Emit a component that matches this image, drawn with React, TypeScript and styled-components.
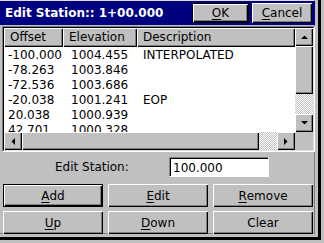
import styled, { createGlobalStyle, css } from "styled-components";

const GlobalStyle = createGlobalStyle`
  html, body {
    margin: 0;
    padding: 0;
    background: #c0c0c0;
  }
  body {
    font-family: "DejaVu Sans", "Liberation Sans", sans-serif;
    font-size: 12px;
    color: #000;
  }
`;

const raised = css`
  background: #c0c0c0;
  box-shadow: inset 1px 1px #fff, inset -1px -1px #000, inset -2px -2px #808080;
`;

const dither = css`
  background: repeating-conic-gradient(#fff 0 25%, #c0c0c0 0 50%) 0 0 / 2px 2px;
`;

const Screen = styled.div`
  width: 324px;
  height: 243px;
  background: #c0c0c0;
  overflow: hidden;
`;

const Window = styled.div`
  box-sizing: border-box;
  width: 321px;
  height: 240px;
  padding: 0 3px 3px 0;
  border-right: 3px solid #000;
  border-bottom: 3px solid #000;
`;

const Frame = styled.div`
  box-sizing: border-box;
  height: 100%;
  border-right: 1px solid #808080;
  border-bottom: 1px solid #808080;
  border-top: 1px solid #dfdfdf;
`;

const TitleBar = styled.div`
  display: flex;
  align-items: center;
  height: 24px;
  margin-right: -1px;
  padding-left: 5px;
  background: #000080;
`;

const Title = styled.div`
  flex: 1;
  color: #fff;
  font-weight: bold;
  font-size: 12px;
  white-space: nowrap;
`;

const TitleButton = styled.div<{ $w: number; $default?: boolean }>`
  ${raised};
  box-sizing: border-box;
  width: ${(p) => p.$w}px;
  height: 20px;
  margin-right: 3px;
  display: flex;
  align-items: center;
  justify-content: center;
  ${(p) => p.$default && "border: 1px solid #000;"}
`;

const Mn = styled.span`
  text-decoration: underline;
  text-underline-offset: 2px;
`;

const ListBox = styled.div`
  box-sizing: border-box;
  width: 313px;
  height: 126px;
  margin: 1px 0 0 2px;
  border: 1px solid;
  border-color: #808080 #fff #fff #808080;
`;

const ListInner = styled.div`
  box-sizing: border-box;
  height: 100%;
  border: 1px solid;
  border-color: #000 #dfdfdf #dfdfdf #000;
  display: grid;
  grid-template-columns: 291px 18px;
  grid-template-rows: 104px 18px;
`;

const Table = styled.div`
  background: #fff;
  overflow: hidden;
`;

const HeaderRow = styled.div`
  display: flex;
  height: 19px;
`;

const HeaderCell = styled.div<{ $w?: number }>`
  ${raised};
  box-sizing: border-box;
  ${(p) => (p.$w ? `width: ${p.$w}px;` : "flex: 1;")}
  height: 19px;
  padding: 1px 0 0 6px;
  line-height: 17px;
  white-space: nowrap;
  overflow: hidden;
`;

const Row = styled.div`
  display: flex;
  height: 15px;
  line-height: 15px;
  white-space: nowrap;
`;

const Cell = styled.div<{ $w?: number }>`
  ${(p) => (p.$w ? `width: ${p.$w}px;` : "flex: 1;")}
  padding-left: 4px;
  box-sizing: border-box;
`;

const Rows = styled.div`
  padding-top: 1px;
`;

const VScroll = styled.div`
  display: flex;
  flex-direction: column;
`;

const HScroll = styled.div`
  display: flex;
`;

const ArrowButton = styled.div`
  ${raised};
  width: 18px;
  height: 18px;
  flex: none;
  display: flex;
  align-items: center;
  justify-content: center;
`;

const Thumb = styled.div<{ $size: number; $vertical?: boolean }>`
  ${raised};
  flex: none;
  ${(p) => (p.$vertical ? `height: ${p.$size}px;` : `width: ${p.$size}px;`)}
`;

const Track = styled.div`
  ${dither};
  flex: 1;
`;

const Corner = styled.div`
  background: #c0c0c0;
`;

const EditRow = styled.div`
  display: flex;
  align-items: center;
  height: 20px;
  margin-top: 5px;
  padding-left: 55px;
`;

const EditLabel = styled.div`
  width: 114px;
`;

const EditInput = styled.div`
  box-sizing: border-box;
  width: 100px;
  height: 20px;
  background: #fff;
  border: 1px solid;
  border-color: #808080 #fff #fff #808080;
  box-shadow: inset 1px 1px #000;
  padding: 2px 0 0 3px;
  line-height: 16px;
`;

const ButtonGrid = styled.div`
  display: grid;
  grid-template-columns: repeat(3, 100px);
  grid-auto-rows: 23px;
  gap: 4px 5px;
  margin: 7px 0 0 3px;
`;

const Button = styled.div<{ $default?: boolean }>`
  ${raised};
  box-sizing: border-box;
  display: flex;
  align-items: center;
  justify-content: center;
  ${(p) => p.$default && "border: 1px solid #000;"}
`;

type Dir = "up" | "down" | "left" | "right";

const arrowPoints: Record<Dir, string> = {
  up: "0,4 7,4 3.5,0.5",
  down: "0,0 7,0 3.5,3.5",
  left: "4,0 4,7 0.5,3.5",
  right: "0,0 0,7 3.5,3.5",
};

function Arrow({ dir }: { dir: Dir }) {
  const vertical = dir === "up" || dir === "down";
  return (
    <ArrowButton>
      <svg width={vertical ? 7 : 4} height={vertical ? 4 : 7}>
        <polygon points={arrowPoints[dir]} fill="#000" />
      </svg>
    </ArrowButton>
  );
}

// last row is partly hidden behind the horizontal scrollbar, as on the device
const rows = [
  ["-100.000", "1004.455", "INTERPOLATED"],
  ["-78.263", "1003.846", ""],
  ["-72.536", "1003.686", ""],
  ["-20.038", "1001.241", "EOP"],
  ["20.038", "1000.939", ""],
  ["42.701", "1000.328", ""],
];

export default function App() {
  return (
    <Screen>
      <GlobalStyle />
      <Window>
        <Frame>
          <TitleBar>
            <Title>Edit Station:: 1+00.000</Title>
            <TitleButton $w={57} $default>
              <Mn>O</Mn>K
            </TitleButton>
            <TitleButton $w={60}>
              <Mn>C</Mn>ancel
            </TitleButton>
          </TitleBar>

          <ListBox>
            <ListInner>
              <Table>
                <HeaderRow>
                  <HeaderCell $w={59}>Offset</HeaderCell>
                  <HeaderCell $w={74}>Elevation</HeaderCell>
                  <HeaderCell>Description</HeaderCell>
                </HeaderRow>
                <Rows>
                  {rows.map((r, i) => (
                    <Row key={i}>
                      <Cell $w={63}>{r[0]}</Cell>
                      <Cell $w={72}>{r[1]}</Cell>
                      <Cell>{r[2]}</Cell>
                    </Row>
                  ))}
                </Rows>
              </Table>
              <VScroll>
                <Arrow dir="up" />
                <Thumb $vertical $size={48} />
                <Track />
                <Arrow dir="down" />
              </VScroll>
              <HScroll>
                <Arrow dir="left" />
                <Thumb $size={237} />
                <Track />
                <Arrow dir="right" />
              </HScroll>
              <Corner />
            </ListInner>
          </ListBox>

          <EditRow>
            <EditLabel>Edit Station:</EditLabel>
            <EditInput>100.000</EditInput>
          </EditRow>

          <ButtonGrid>
            <Button $default>
              <Mn>A</Mn>dd
            </Button>
            <Button>
              <Mn>E</Mn>dit
            </Button>
            <Button>
              <Mn>R</Mn>emove
            </Button>
            <Button>
              <Mn>U</Mn>p
            </Button>
            <Button>
              <Mn>D</Mn>own
            </Button>
            <Button>Clear</Button>
          </ButtonGrid>
        </Frame>
      </Window>
    </Screen>
  );
}
